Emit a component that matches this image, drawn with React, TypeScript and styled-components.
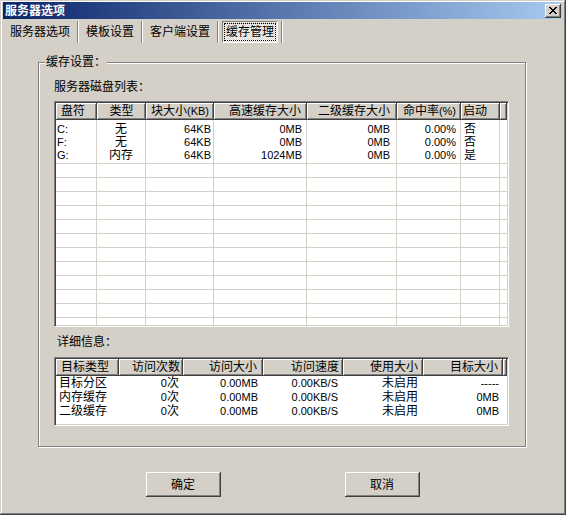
import React from 'react';
import styled, { createGlobalStyle, css } from 'styled-components';

const GlobalStyle = createGlobalStyle`
  html, body {
    margin: 0;
    padding: 0;
    background: #d4d0c8;
  }
  body {
    font-family: "Liberation Sans", "Noto Sans CJK SC", sans-serif;
    font-size: 12px;
    color: #000;
  }
  * {
    box-sizing: border-box;
  }
`;

type Align = 'left' | 'center' | 'right';

interface Column {
  title: string;
  w: number;
  head: Align;
  cell: Align;
  hp?: number;
  cp?: number;
}

const diskColumns: Column[] = [
  { title: '盘符', w: 41, head: 'left', cell: 'left', hp: 5, cp: 1 },
  { title: '类型', w: 49, head: 'center', cell: 'center' },
  { title: '块大小(KB)', w: 68, head: 'right', cell: 'right', hp: 4, cp: 2 },
  { title: '高速缓存大小', w: 93, head: 'right', cell: 'right', hp: 5, cp: 4 },
  { title: '二级缓存大小', w: 90, head: 'right', cell: 'right', hp: 6, cp: 6 },
  { title: '命中率(%)', w: 64, head: 'right', cell: 'right', hp: 4, cp: 4 },
  { title: '启动', w: 39, head: 'left', cell: 'left', hp: 2, cp: 3 },
];

const diskRows = [
  ['C:', '无', '64KB', '0MB', '0MB', '0.00%', '否'],
  ['F:', '无', '64KB', '0MB', '0MB', '0.00%', '否'],
  ['G:', '内存', '64KB', '1024MB', '0MB', '0.00%', '是'],
];

const detailColumns: Column[] = [
  { title: '目标类型', w: 63, head: 'left', cell: 'left', hp: 5, cp: 3 },
  { title: '访问次数', w: 64, head: 'right', cell: 'right', hp: 2, cp: 4 },
  { title: '访问大小', w: 80, head: 'right', cell: 'right', hp: 5, cp: 5 },
  { title: '访问速度', w: 80, head: 'right', cell: 'right', hp: 3, cp: 5 },
  { title: '使用大小', w: 80, head: 'right', cell: 'right', hp: 4, cp: 5 },
  { title: '目标大小', w: 80, head: 'right', cell: 'right', hp: 4, cp: 4 },
];

const detailRows = [
  ['目标分区', '0次', '0.00MB', '0.00KB/S', '未启用', '-----'],
  ['内存缓存', '0次', '0.00MB', '0.00KB/S', '未启用', '0MB'],
  ['二级缓存', '0次', '0.00MB', '0.00KB/S', '未启用', '0MB'],
];

const tabs = ['服务器选项', '模板设置', '客户端设置', '缓存管理'];

const closeGlyph = ['11000011', '01100110', '00111100', '00011000', '00111100', '01100110', '11000011'];

const raised = css`
  background: #d4d0c8;
  box-shadow: inset -1px -1px #404040, inset 1px 1px #fff, inset -2px -2px #808080;
`;

const Window = styled.div`
  width: 566px;
  height: 515px;
  background: #d4d0c8;
  padding: 2px 4px 3px 3px;
  box-shadow: inset -1px -1px #404040, inset 1px 1px #d4d0c8, inset -2px -2px #808080, inset 2px 2px #fff;
  display: flex;
  flex-direction: column;
`;

const TitleBar = styled.div`
  height: 17px;
  flex: none;
  display: flex;
  align-items: center;
  justify-content: space-between;
  padding: 0 1px 0 2px;
  background: linear-gradient(to right, #0a246a, #a6caf0);
`;

const TitleText = styled.span`
  color: #fff;
  font-weight: bold;
  line-height: 14px;
`;

const CloseButton = styled.div`
  ${raised};
  width: 16px;
  height: 14px;
  display: flex;
  align-items: center;
  justify-content: center;
  padding-right: 1px;
`;

const TabRow = styled.div`
  display: flex;
  height: 22px;
  margin-top: 2px;
  flex: none;
`;

const Tab = styled.div<{ $active?: boolean }>`
  display: flex;
  align-items: center;
  margin: 0 3px;
  padding: 0 4px;
  line-height: 14px;
  white-space: nowrap;
  ${(p) =>
    p.$active &&
    css`
      padding: 0 3px;
      border: 1px solid;
      border-color: #808080 #fff #fff #808080;
      background: repeating-conic-gradient(#fff 0 25%, #d4d0c8 0 50%) 0 0 / 2px 2px;
      outline: 1px dotted #000;
      outline-offset: -3px;
    `}
`;

const TabSeparator = styled.div`
  width: 2px;
  border-left: 1px solid #808080;
  border-right: 1px solid #fff;
`;

const GroupBox = styled.div`
  position: relative;
  width: 488px;
  height: 385px;
  margin: 19px 0 0 35px;
  padding: 18px 16px 0 15px;
  border: 1px solid #808080;
  box-shadow: inset 1px 1px #fff, 1px 1px #fff;
  display: flex;
  flex-direction: column;
  flex: none;
`;

const GroupCaption = styled.span`
  position: absolute;
  top: -8px;
  left: 6px;
  padding: 0 1px;
  background: #d4d0c8;
  line-height: 14px;
`;

const Label = styled.div<{ $indent?: number; $gap?: number }>`
  line-height: 12px;
  padding-left: ${(p) => p.$indent ?? 0}px;
  margin-top: ${(p) => p.$gap ?? 0}px;
`;

const ListView = styled.div<{ $height: number; $gap: number }>`
  height: ${(p) => p.$height}px;
  margin-top: ${(p) => p.$gap}px;
  flex: none;
  border: 1px solid;
  border-color: #808080 #fff #fff #808080;
  box-shadow: inset 1px 1px #404040, inset -1px -1px #d4d0c8;
  background: #fff;
  padding: 1px;
  display: flex;
  flex-direction: column;
  overflow: hidden;
`;

const HeaderRow = styled.div`
  display: flex;
  height: 17px;
  flex: none;
`;

const HeaderCell = styled.div<{ $w: number; $align: Align; $pad: number }>`
  ${raised};
  width: ${(p) => p.$w}px;
  flex: none;
  line-height: 17px;
  white-space: nowrap;
  overflow: hidden;
  text-align: ${(p) => p.$align};
  padding-left: ${(p) => (p.$align === 'left' ? p.$pad : 0)}px;
  padding-right: ${(p) => (p.$align === 'right' ? p.$pad + 1 : 0)}px;
`;

const HeaderFill = styled.div`
  ${raised};
  flex: 1;
`;

const Body = styled.div<{ $grid?: boolean }>`
  flex: 1;
  display: flex;
  ${(p) =>
    p.$grid &&
    css`
      background-image: repeating-linear-gradient(to bottom, transparent 0 13px, #d4d0c8 13px 14px);
      background-position: 0 30px;
      background-repeat: no-repeat;
    `}
`;

const BodyColumn = styled.div<{ $w: number; $grid?: boolean; $top: number }>`
  width: ${(p) => p.$w}px;
  flex: none;
  padding-top: ${(p) => p.$top}px;
  border-right: ${(p) => (p.$grid ? '1px solid #d4d0c8' : 'none')};
`;

const Cell = styled.div<{ $align: Align; $pad: number; $h: number }>`
  height: ${(p) => p.$h}px;
  line-height: ${(p) => p.$h}px;
  white-space: nowrap;
  overflow: hidden;
  text-align: ${(p) => p.$align};
  padding-left: ${(p) => (p.$align === 'left' ? p.$pad : 0)}px;
  padding-right: ${(p) => (p.$align === 'right' ? p.$pad : 0)}px;
`;

const Latin = styled.span`
  font-size: 11px;
`;

const ButtonRow = styled.div`
  display: flex;
  justify-content: center;
  gap: 124px;
  margin-top: 25px;
`;

const Button = styled.div`
  ${raised};
  width: 75px;
  height: 25px;
  display: flex;
  align-items: center;
  justify-content: center;
  line-height: 14px;
`;

const ascii = /^[\x20-\x7e]+$/;

function txt(s: string) {
  return s
    .split(/([\x20-\x7e]+)/)
    .filter(Boolean)
    .map((part, i) => (ascii.test(part) ? <Latin key={i}>{part}</Latin> : <span key={i}>{part}</span>));
}

function CloseGlyph() {
  return (
    <svg width="8" height="7" viewBox="0 0 8 7" shapeRendering="crispEdges">
      {closeGlyph.map((row, y) =>
        row.split('').map((c, x) => (c === '1' ? <rect key={`${x}-${y}`} x={x} y={y} width="1" height="1" fill="#000" /> : null))
      )}
    </svg>
  );
}

function List({
  columns,
  rows,
  height,
  gap,
  grid,
  rowHeight,
  top,
}: {
  columns: Column[];
  rows: string[][];
  height: number;
  gap: number;
  grid?: boolean;
  rowHeight: number;
  top: number;
}) {
  return (
    <ListView $height={height} $gap={gap}>
      <HeaderRow>
        {columns.map((c) => (
          <HeaderCell key={c.title} $w={c.w} $align={c.head} $pad={c.hp ?? 0}>
            {txt(c.title)}
          </HeaderCell>
        ))}
        <HeaderFill />
      </HeaderRow>
      <Body $grid={grid}>
        {columns.map((c, ci) => (
          <BodyColumn key={c.title} $w={c.w} $grid={grid} $top={top}>
            {rows.map((r, ri) => (
              <Cell key={ri} $align={c.cell} $pad={c.cp ?? 0} $h={rowHeight}>
                {txt(r[ci])}
              </Cell>
            ))}
          </BodyColumn>
        ))}
      </Body>
    </ListView>
  );
}

export default function App() {
  return (
    <>
      <GlobalStyle />
      <Window>
        <TitleBar>
          <TitleText>服务器选项</TitleText>
          <CloseButton>
            <CloseGlyph />
          </CloseButton>
        </TitleBar>
        <TabRow>
          {tabs.map((t, i) => (
            <React.Fragment key={t}>
              <Tab $active={i === 3}>{t}</Tab>
              <TabSeparator />
            </React.Fragment>
          ))}
        </TabRow>
        <GroupBox>
          <GroupCaption>缓存设置：</GroupCaption>
          <Label>服务器磁盘列表：</Label>
          <List columns={diskColumns} rows={diskRows} height={226} gap={8} grid rowHeight={13} top={3} />
          <Label $indent={3} $gap={9}>
            详细信息：
          </Label>
          <List columns={detailColumns} rows={detailRows} height={69} gap={9} rowHeight={14} top={0} />
        </GroupBox>
        <ButtonRow>
          <Button>确定</Button>
          <Button>取消</Button>
        </ButtonRow>
      </Window>
    </>
  );
}
